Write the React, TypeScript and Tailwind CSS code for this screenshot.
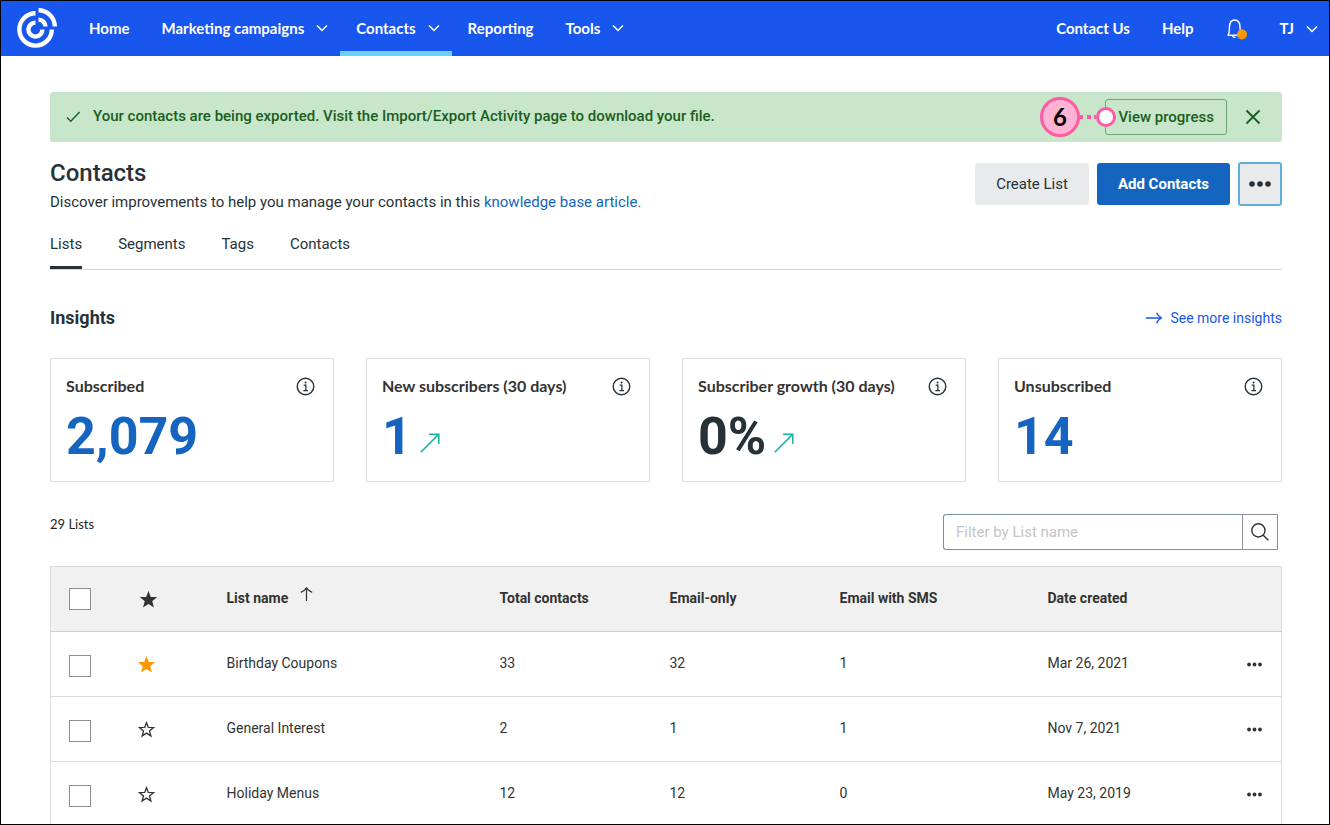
import { useState } from "react";

type NavItem = { label: string; menu?: boolean; active?: boolean };
type Insight = { label: string; value: string; link?: boolean; trend?: boolean };
type ContactList = { name: string; total: number; email: number; sms: number; created: string; favorite?: boolean };

const navItems: NavItem[] = [
  { label: "Home" },
  { label: "Marketing campaigns", menu: true },
  { label: "Contacts", menu: true, active: true },
  { label: "Reporting" },
  { label: "Tools", menu: true },
];

const tabs = ["Lists", "Segments", "Tags", "Contacts"];

const insights: Insight[] = [
  { label: "Subscribed", value: "2,079", link: true },
  { label: "New subscribers (30 days)", value: "1", link: true, trend: true },
  { label: "Subscriber growth (30 days)", value: "0%", trend: true },
  { label: "Unsubscribed", value: "14", link: true },
];

const lists: ContactList[] = [
  { name: "Birthday Coupons", total: 33, email: 32, sms: 1, created: "Mar 26, 2021", favorite: true },
  { name: "General Interest", total: 2, email: 1, sms: 1, created: "Nov 7, 2021" },
  { name: "Holiday Menus", total: 12, email: 12, sms: 0, created: "May 23, 2019" },
];

function Logo() {
  return (
    <svg width="40" height="40" viewBox="0 0 40 40" fill="none" stroke="#fff" strokeWidth="4.4">
      <path d="M18.5 5.2A16.2 16.2 0 1 0 34.8 21.5" />
      <path d="M21.5 2.2A16.4 16.4 0 0 1 37.8 18.5" />
      <path d="M18.5 14.6A7 7 0 1 0 25.4 21.5" />
      <path d="M21.5 11.6A7 7 0 0 1 28.4 18.5" />
    </svg>
  );
}

function Chevron() {
  return (
    <svg width="12" height="12" viewBox="0 0 12 12" fill="none" stroke="currentColor" strokeWidth="1.5">
      <path d="M1 3.5 6 8.5 11 3.5" />
    </svg>
  );
}

function Dots({ size }: { size: number }) {
  return (
    <svg width={size} height={size} viewBox="0 0 22 22" fill="currentColor">
      <circle cx="3" cy="11" r="2.8" />
      <circle cx="11" cy="11" r="2.8" />
      <circle cx="19" cy="11" r="2.8" />
    </svg>
  );
}

function Star({ className }: { className: string }) {
  return (
    <svg className={className} width="17" height="17" viewBox="0 0 17 17" strokeWidth="1.3">
      <path d="M8.5 1.7 10.3 6.4 15.6 6.6 11.5 9.9 12.9 15 8.5 12.1 4.1 15 5.5 9.9 1.4 6.6 6.7 6.4Z" />
    </svg>
  );
}

function Checkbox({ label }: { label: string }) {
  return (
    <input type="checkbox" aria-label={label} className="block size-[22px] appearance-none border border-[#8f8f8f] bg-white checked:bg-[#1565c0]" />
  );
}

function Header() {
  return (
    <header className="flex h-[55px] items-stretch justify-between bg-[#1856ed] pl-4 font-['Lato',sans-serif] text-[15px] font-bold text-white">
      <div className="flex">
        <a href="#" aria-label="Dashboard" className="mr-4 flex items-center pb-0.5">
          <Logo />
        </a>
        <nav className="flex">
          {navItems.map((item) => (
            <a
              key={item.label}
              href="#"
              className={`flex items-center gap-3 border-b-[5px] pt-1 pl-4 ${item.menu ? "pr-3" : "pr-4"} ${item.active ? "border-[#66d3ff]" : "border-transparent"}`}
            >
              {item.label}
              {item.menu && <Chevron />}
            </a>
          ))}
        </nav>
      </div>
      <div className="flex items-center gap-8 pr-[11px]">
        <a href="#">Contact Us</a>
        <a href="#">Help</a>
        <button type="button" aria-label="Notifications">
          <svg width="22" height="24" viewBox="0 0 22 24" fill="none" stroke="#fff" strokeWidth="1.4">
            <path d="M1.5 18.2H15.5M1.8 18.2C3.4 16.6 3.4 14 3.4 10.5C3.4 5.5 5.4 3 8.7 3C12 3 14 5.5 14 10.5C14 13 14 15 15 17" />
            <path d="M6.5 18.5C6.8 20.3 8.2 20.6 9.6 20.2" />
            <circle cx="16" cy="17.5" r="5" fill="#ff9800" stroke="none" />
          </svg>
        </button>
        <button type="button" className="flex items-center gap-3">
          TJ
          <Chevron />
        </button>
      </div>
    </header>
  );
}

function Banner({ onClose }: { onClose: () => void }) {
  return (
    <div className="flex h-[50px] items-center rounded-[3px] bg-[#c8e6c9] pr-[21px] pl-4 font-medium text-[#1b5e20]">
      <svg className="mb-0.5" width="15" height="15" viewBox="0 0 15 15" fill="none" stroke="currentColor" strokeWidth="1.4">
        <path d="M1 8.6 4.8 12.2 13.6 3" />
      </svg>
      <p className="ml-3 flex-1 pb-0.5 text-[15px]">
        Your contacts are being exported. Visit the Import/Export Activity page to download your file.
      </p>
      <div className="relative">
        <button type="button" className="h-9 rounded-[3px] border border-[#6fa473] px-3 text-[15px]">
          View progress
        </button>
        <div className="absolute top-1/2 right-0 flex w-[187px] -translate-y-1/2 items-center">
          <span className="flex size-10 items-center justify-center rounded-full border-[3px] border-[#ff5ba5] bg-[#ffb3d4] font-['Lato',sans-serif] text-2xl font-bold text-black">
            6
          </span>
          <svg width="16" height="4" viewBox="0 0 16 4" fill="#ff5ba5">
            <path d="M0 0h3v4H0zM7 0h4v4H7zM14 0h2v4h-2z" />
          </svg>
          <span className="size-5 rounded-full border-[3px] border-[#ff5ba5] bg-white" />
        </div>
      </div>
      <button type="button" aria-label="Close" onClick={onClose} className="ml-[18px]">
        <svg width="16" height="16" viewBox="0 0 16 16" fill="none" stroke="currentColor" strokeWidth="1.8">
          <path d="M1.5 1.5 14.5 14.5M14.5 1.5 1.5 14.5" />
        </svg>
      </button>
    </div>
  );
}

function InsightCard({ label, value, link, trend }: Insight) {
  return (
    <div className="h-[124px] border border-[#dcdcdc] px-[15px] pt-[17px]">
      <div className="flex items-center justify-between pr-[3px]">
        <h3 className="font-['Lato',sans-serif] text-base leading-5 font-bold text-[#333]">{label}</h3>
        <button type="button" aria-label={`About ${label}`}>
          <svg width="19" height="19" viewBox="0 0 19 19" fill="none" stroke="#263238" strokeWidth="1.4">
            <circle cx="9.5" cy="9.5" r="8.3" />
            <path d="M7.7 8.2H9.9V13.4M7.4 13.6H12" strokeWidth="1.3" />
            <circle cx="9.6" cy="5.6" r="1" fill="#263238" stroke="none" />
          </svg>
        </button>
      </div>
      <div className="mt-[11px] flex items-center gap-2">
        <span className={`text-[52px] leading-[60px] font-bold ${link ? "text-[#1565c0]" : "text-[#263238]"}`}>{value}</span>
        {trend && (
          <svg className="mt-3" width="20" height="20" viewBox="0 0 20 20" fill="none" stroke="#14b1a4" strokeWidth="1.5">
            <path d="M.8 19.2 18.6 1.4M9 1.3H18.8V11" />
          </svg>
        )}
      </div>
    </div>
  );
}

function ListTable() {
  return (
    <table className="mt-4 w-full table-fixed border-collapse border border-[#dcdcdc] text-left text-sm text-[#333]">
      <colgroup>
        <col className="w-[71px]" />
        <col className="w-[87px]" />
        <col className="w-[273px]" />
        <col className="w-[170px]" />
        <col className="w-[170px]" />
        <col className="w-[208px]" />
        <col />
        <col className="w-[53px]" />
      </colgroup>
      <thead>
        <tr className="h-[65px] border-b border-[#cfcfcf] bg-[#f1f1f1] *:pl-[18px]">
          <th><Checkbox label="Select all lists" /></th>
          <th aria-label="Favorite"><Star className="fill-[#333] stroke-[#333]" /></th>
          <th className="pb-0.5">
            <button type="button" className="flex items-center gap-3">
              List name
              <svg className="mb-2" width="13" height="14" viewBox="0 0 13 14" fill="none" stroke="currentColor" strokeWidth="1.2">
                <path d="M6.5 14V.9M.8 5.4Q4.5 4 6.5.9Q8.5 4 12.2 5.4" />
              </svg>
            </button>
          </th>
          <th className="pb-0.5">Total contacts</th>
          <th className="pb-0.5">Email-only</th>
          <th className="pb-0.5">Email with SMS</th>
          <th className="pb-0.5">Date created</th>
          <th aria-label="Actions"></th>
        </tr>
      </thead>
      <tbody>
        {lists.map((list) => (
          <tr key={list.name} className="h-[65px] border-b border-[#dcdcdc] *:pl-[18px]">
            <td className="pt-1"><Checkbox label={"Select " + list.name} /></td>
            <td>
              <button type="button" aria-label={"Favorite " + list.name} className="-ml-0.5 block">
                <Star className={list.favorite ? "fill-[#ff9800] stroke-[#ff9800]" : "fill-none stroke-[#333]"} />
              </button>
            </td>
            <td className="pb-0.5">{list.name}</td>
            <td className="pb-0.5">{list.total}</td>
            <td className="pb-0.5">{list.email}</td>
            <td className="pb-0.5">{list.sms}</td>
            <td className="pb-0.5">{list.created}</td>
            <td>
              <button type="button" aria-label={"Actions for " + list.name} className="block">
                <Dots size={15} />
              </button>
            </td>
          </tr>
        ))}
      </tbody>
    </table>
  );
}

export default function App() {
  const [showBanner, setShowBanner] = useState(true);
  const [tab, setTab] = useState("Lists");
  const [filter, setFilter] = useState("");

  return (
    <div className="h-screen overflow-hidden border border-black bg-white font-['Roboto',sans-serif] text-[#263238]">
      <Header />
      <main className="pt-9 pr-[47px] pl-[49px]">
        {showBanner && <Banner onClose={() => setShowBanner(false)} />}

        <div className="mt-4 flex items-start justify-between">
          <div>
            <h1 className="text-2xl leading-[30px] font-medium">Contacts</h1>
            <p className="mt-1 text-[15px] leading-5">
              Discover improvements to help you manage your contacts in this{" "}
              <a href="#" className="text-[#1565c0]">knowledge base article.</a>
            </p>
          </div>
          <div className="mt-1 flex items-center gap-2 text-[15px]">
            <button type="button" className="h-[42px] rounded-[3px] bg-[#e8eaeb] px-[21px]">Create List</button>
            <button type="button" className="h-[42px] rounded-[3px] bg-[#1565c0] px-[21px] font-bold text-white">Add Contacts</button>
            <button type="button" aria-label="More actions" className="flex h-11 w-11 items-center justify-center rounded-[3px] border-2 border-[#5eb0dc] bg-[#e8eaeb]">
              <Dots size={22} />
            </button>
          </div>
        </div>

        <div className="mt-[22px] flex gap-9 border-b border-[#cfd8dc]">
          {tabs.map((name) => (
            <button
              key={name}
              type="button"
              onClick={() => setTab(name)}
              className={`border-b-[3px] pb-3 text-[15px] leading-5 ${tab === name ? "border-[#263238]" : "border-transparent"}`}
            >
              {name}
            </button>
          ))}
        </div>

        <div className="mt-9 flex items-center justify-between">
          <h2 className="text-lg leading-6 font-bold">Insights</h2>
          <a href="#" className="flex items-center gap-2 text-sm text-[#1856ed]">
            <svg width="16" height="12" viewBox="0 0 16 12" fill="none" stroke="currentColor" strokeWidth="1.3">
              <path d="M0 6H15.5M10.6.8Q12 4.5 15.6 6Q12 7.5 10.6 11.2" />
            </svg>
            See more insights
          </a>
        </div>

        <div className="mt-7 grid grid-cols-4 gap-8">
          {insights.map((item) => (
            <InsightCard key={item.label} {...item} />
          ))}
        </div>

        <div className="mt-8 flex justify-between">
          <p className="font-['Lato',sans-serif] text-[13px] leading-5 text-[#222]">29 Lists</p>
          <form className="mr-1 flex h-9" onSubmit={(e) => e.preventDefault()}>
            <input
              type="text"
              aria-label="Filter by List name"
              placeholder="Filter by List name"
              value={filter}
              onChange={(e) => setFilter(e.target.value)}
              className="w-[299px] rounded-l-[3px] border border-r-0 border-[#78909c] px-3 text-[15px] outline-none placeholder:text-[#c4c4c4]"
            />
            <button type="submit" aria-label="Search" className="flex w-9 items-center justify-center border border-[#8f8f8f]">
              <svg width="18" height="18" viewBox="0 0 18 18" fill="none" stroke="#333" strokeWidth="1.4">
                <circle cx="7.4" cy="7.4" r="6.6" />
                <path d="M12 12 17.4 17.2" />
              </svg>
            </button>
          </form>
        </div>

        <ListTable />
      </main>
    </div>
  );
}
